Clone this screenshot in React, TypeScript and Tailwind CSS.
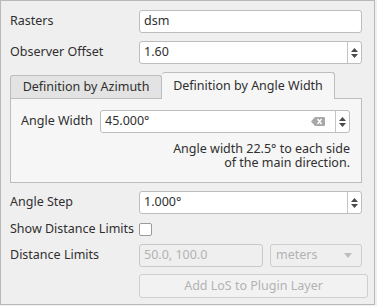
import React from "react";

const Spin = () => (
  <div className="flex w-[14px] flex-col items-center justify-center gap-[2px] border-l border-[#c4c4c4]">
    <svg width="7" height="4" viewBox="0 0 7 4">
      <path d="M0 4 L3.5 0 L7 4 Z" fill="#4a4a4a" />
    </svg>
    <svg width="7" height="4" viewBox="0 0 7 4">
      <path d="M0 0 L3.5 4 L7 0 Z" fill="#4a4a4a" />
    </svg>
  </div>
);

const ClearIcon = () => (
  <svg width="14" height="9" viewBox="0 0 14 9" className="mr-[10px]">
    <path d="M4 0 H13 Q14 0 14 1 V8 Q14 9 13 9 H4 L0 4.5 Z" fill="#a8a8a8" />
    <path d="M6.5 2 L10.5 7 M10.5 2 L6.5 7" stroke="#fff" strokeWidth="1.4" />
  </svg>
);

const Label = ({ children }: { children: React.ReactNode }) => (
  <div className="w-[129px] shrink-0 whitespace-nowrap text-[#2f2f2f]">{children}</div>
);

const App = () => {
  return (
    <div
      className="h-[306px] w-[377px] bg-[#efefef]"
      style={{ fontFamily: "'Noto Sans', 'DejaVu Sans', sans-serif" }}
    >
      <div className="flex h-[305px] w-[375px] flex-col border border-[#b9b9b9] pl-[9px] pr-[12px] pt-[9px] text-[12.5px] text-[#2f2f2f]">
        <div className="flex h-[23px] items-center">
          <Label>Rasters</Label>
          <div className="flex h-[23px] flex-1 items-center rounded-[3px] border border-[#bdbdbd] bg-white pl-[4px]">
            dsm
          </div>
        </div>

        <div className="mt-[8px] flex h-[23px] items-center">
          <Label>Observer Offset</Label>
          <div className="flex h-[23px] flex-1 items-stretch rounded-[3px] border border-[#bdbdbd] bg-white">
            <div className="flex flex-1 items-center pl-[4px]">1.60</div>
            <Spin />
          </div>
        </div>

        <div className="mt-[8px] flex flex-col">
          <div className="flex h-[26px] items-end">
            <div className="flex h-[23px] w-[152px] items-center justify-center rounded-t-[3px] border border-b-0 border-[#bdbdbd] bg-[#e3e3e3]">
              Definition by Azimuth
            </div>
            <div className="-mb-px z-10 flex h-[27px] w-[173px] items-center justify-center rounded-t-[3px] border border-b-0 border-l-0 border-[#bdbdbd] bg-[#f6f6f6]">
              Definition by Angle Width
            </div>
          </div>
          <div className="flex h-[85px] flex-col border border-[#bdbdbd] bg-[#f6f6f6] pl-[10px] pr-[11px] pt-[11px]">
            <div className="flex h-[23px] items-center">
              <div className="w-[79px] shrink-0">Angle Width</div>
              <div className="flex h-[23px] flex-1 items-stretch rounded-[3px] border border-[#bdbdbd] bg-white">
                <div className="flex flex-1 items-center pl-[4px]">45.000°</div>
                <div className="flex items-center">
                  <ClearIcon />
                </div>
                <Spin />
              </div>
            </div>
            <div className="mt-[9px] flex flex-col items-end leading-[14px]">
              <span>Angle width 22.5° to each side</span>
              <span>of the main direction.</span>
            </div>
          </div>
        </div>

        <div className="mt-[8px] flex h-[23px] items-center">
          <Label>Angle Step</Label>
          <div className="flex h-[23px] flex-1 items-stretch rounded-[3px] border border-[#bdbdbd] bg-white">
            <div className="flex flex-1 items-center pl-[4px]">1.000°</div>
            <Spin />
          </div>
        </div>

        <div className="mt-[8px] flex h-[14px] items-center">
          <Label>Show Distance Limits</Label>
          <div className="h-[13px] w-[13px] rounded-[2px] border border-[#9a9a9a] bg-white" />
        </div>

        <div className="mt-[8px] flex h-[23px] items-center">
          <Label>Distance Limits</Label>
          <div className="flex h-[23px] w-[124px] items-center rounded-[3px] border border-[#c8c8c8] bg-[#efefef] pl-[4px] text-[#b2b2b2]">
            50.0, 100.0
          </div>
          <div className="ml-[7px] flex h-[23px] flex-1 items-center justify-between rounded-[3px] border border-[#cdcdcd] pl-[5px] pr-[9px] text-[#b2b2b2]">
            meters
            <svg width="8" height="5" viewBox="0 0 8 5">
              <path d="M0 0 L4 5 L8 0 Z" fill="#bdbdbd" />
            </svg>
          </div>
        </div>

        <div className="mt-[7px] flex h-[24px]">
          <div className="w-[129px] shrink-0" />
          <div className="-mr-[6px] flex flex-1 items-center justify-center rounded-[3px] border border-[#cfcfcf] bg-[#f2f2f2] text-[#b2b2b2]">
            Add LoS to Plugin Layer
          </div>
        </div>
      </div>
    </div>
  );
};

export default App;
